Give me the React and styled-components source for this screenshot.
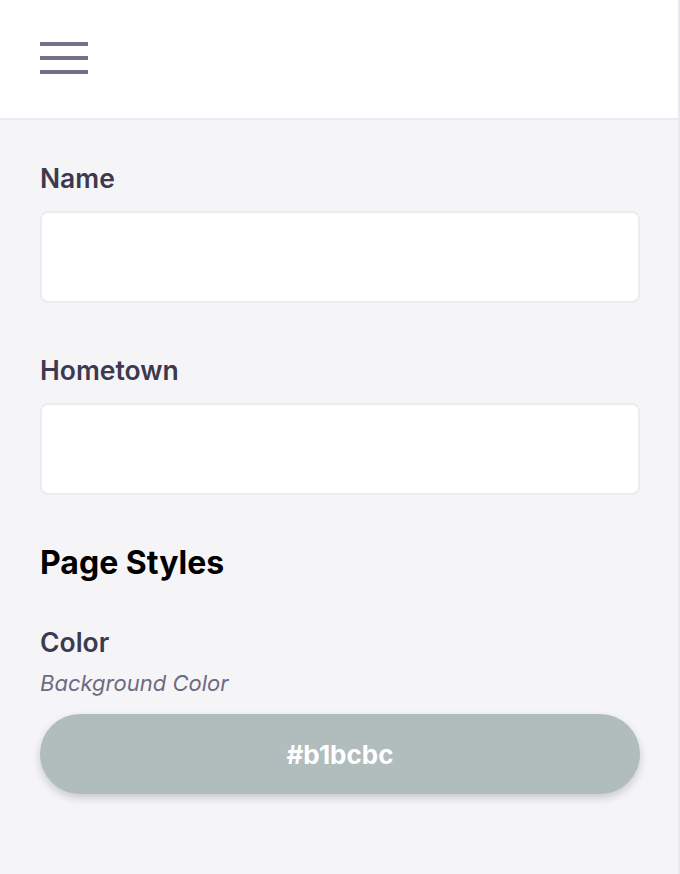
import React from "react";
import styled, { createGlobalStyle } from "styled-components";

const GlobalStyle = createGlobalStyle`
  html, body {
    margin: 0;
    padding: 0;
    background: #f5f5f8;
    font-family: Inter, "Noto Sans", sans-serif;
  }
  * {
    box-sizing: border-box;
  }
`;

const Shell = styled.div`
  width: 680px;
  min-height: 874px;
  border-right: 2px solid #e9e9ee;
  background: #f5f5f8;
`;

const Header = styled.header`
  height: 120px;
  background: #fff;
  border-bottom: 2px solid #ebebf0;
  display: flex;
  align-items: flex-start;
  padding: 42px 40px 0 40px;
`;

const MenuButton = styled.button`
  width: 48px;
  height: 32px;
  padding: 0;
  border: none;
  background: transparent;
  display: flex;
  flex-direction: column;
  justify-content: space-between;
  cursor: pointer;

  span {
    display: block;
    height: 4px;
    width: 100%;
    background: #757088;
  }
`;

const Form = styled.main`
  padding: 39px 38px 0 40px;
`;

const Field = styled.div`
  margin-bottom: 48px;
`;

const Label = styled.label`
  display: block;
  padding-top: 1px;
  font-size: 26.5px;
  font-weight: 600;
  line-height: 36px;
  color: #3d3a50;
  margin-bottom: ${(p) => (p.$tight ? "8px" : "15px")};
`;

const Input = styled.input`
  display: block;
  width: 100%;
  height: 92px;
  border: 2px solid #ebebf0;
  border-radius: 8px;
  background: #fff;
  font-family: inherit;
  font-size: 24px;
  padding: 0 20px;
  outline: none;
`;

const SectionTitle = styled.h2`
  margin: 0 0 42px 0;
  padding-top: 1px;
  font-size: 32px;
  font-weight: 700;
  line-height: 37px;
  color: #000;
`;

const Hint = styled.p`
  margin: 0 0 16px 0;
  font-size: 22px;
  font-style: italic;
  line-height: 30px;
  color: #6e6a80;
`;

const Swatch = styled.button`
  display: block;
  width: 100%;
  height: 80px;
  border: none;
  border-radius: 40px;
  background: ${(p) => p.$color};
  box-shadow: 0 4px 8px rgba(0, 0, 0, 0.18);
  color: #fff;
  font-family: inherit;
  font-size: 26px;
  font-weight: 700;
  cursor: pointer;
`;

const App = () => {
  const color = "#b1bcbc";
  return (
    <Shell>
      <GlobalStyle />
      <Header>
        <MenuButton aria-label="Menu">
          <span />
          <span />
          <span />
        </MenuButton>
      </Header>
      <Form>
        <Field>
          <Label>Name</Label>
          <Input type="text" />
        </Field>
        <Field>
          <Label>Hometown</Label>
          <Input type="text" />
        </Field>
        <SectionTitle>Page Styles</SectionTitle>
        <Label $tight>Color</Label>
        <Hint>Background Color</Hint>
        <Swatch $color={color}>{color}</Swatch>
      </Form>
    </Shell>
  );
};

export default App;
